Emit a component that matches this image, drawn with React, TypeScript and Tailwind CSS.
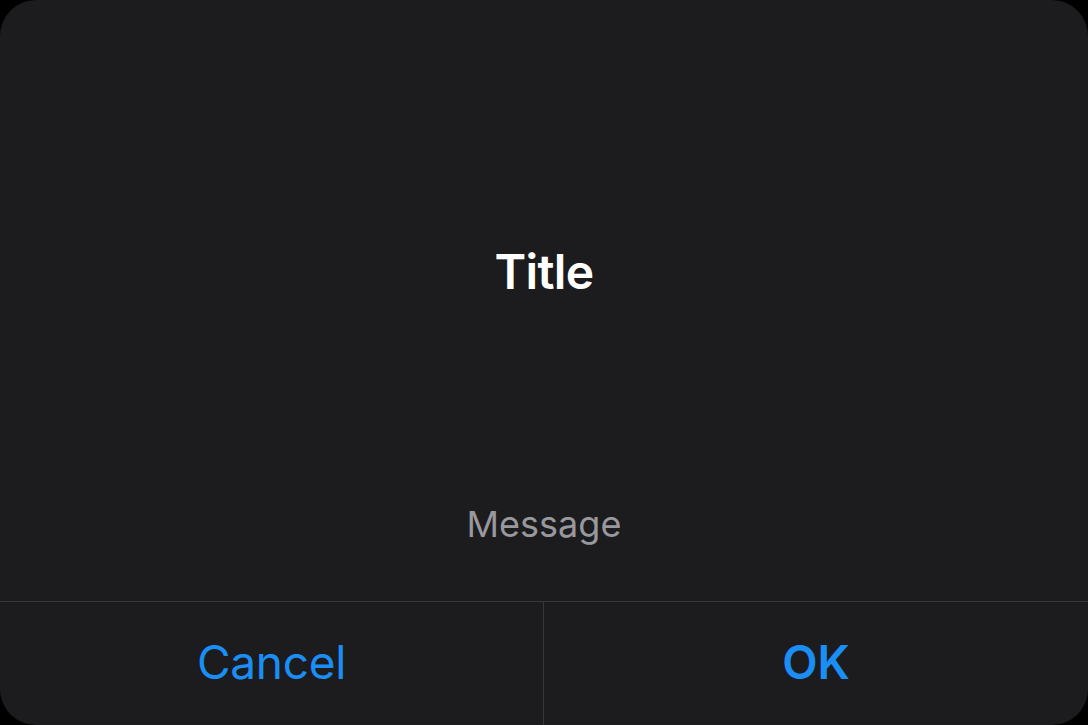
export default function App() {
  return (
    <div className="h-[725px] w-[1088px] bg-black" style={{ fontFamily: 'Inter, "Noto Sans", sans-serif' }}>
      <div className="flex h-full w-full flex-col overflow-hidden rounded-[36px] bg-[#1c1c1e]">
        <div className="flex flex-1 flex-col items-center pt-[242px]">
          <h1 className="text-[48px] font-semibold leading-[60px] tracking-[-0.6px] text-white">Title</h1>
          <p className="mt-[200px] text-[36px] leading-[44px] text-[#98989d]">Message</p>
        </div>
        <div className="grid h-[124px] grid-cols-2 border-t border-[#38383a]">
          <button className="flex items-center justify-center border-r border-[#38383a] pb-[2px] text-[46px] tracking-[-0.3px] text-[#1a8ef5]">
            Cancel
          </button>
          <button className="flex items-center justify-center pb-[2px] text-[46px] font-semibold text-[#1a8ef5]">
            OK
          </button>
        </div>
      </div>
    </div>
  )
}
